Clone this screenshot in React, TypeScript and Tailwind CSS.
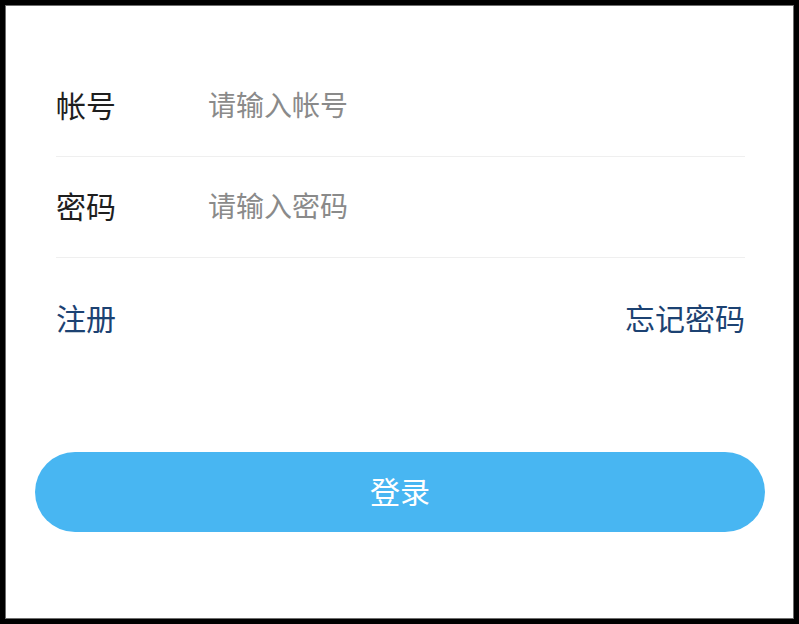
import React from "react";

const font = { fontFamily: '"Noto Sans CJK SC", "Noto Sans", sans-serif' };

export default function App() {
  return (
    <div className="w-[799px] h-[624px] bg-black p-[5px]" style={font}>
      <div className="h-full w-full border border-[#6e6e6e] bg-white flex flex-col">
        <div className="pt-[50px] pl-[50px] pr-[48px]">
          <div className="h-[101px] pb-[5px] flex items-center border-b border-[#efefef]">
            <span className="w-[152px] text-[30px] leading-none text-[#1e1e1e]">帐号</span>
            <input
              className="flex-1 text-[28px] leading-none outline-none bg-transparent text-[#333] placeholder:text-[#8a8a8a]"
              placeholder="请输入帐号"
            />
          </div>
          <div className="h-[101px] pb-[5px] flex items-center border-b border-[#efefef]">
            <span className="w-[152px] text-[30px] leading-none text-[#1e1e1e]">密码</span>
            <input
              type="password"
              className="flex-1 text-[28px] leading-none outline-none bg-transparent text-[#333] placeholder:text-[#8a8a8a]"
              placeholder="请输入密码"
            />
          </div>
          <div className="h-[122px] pb-[4px] flex items-center justify-between text-[30px] leading-none text-[#1c4272]">
            <span>注册</span>
            <span>忘记密码</span>
          </div>
        </div>
        <div className="mt-[72px] pl-[29px] pr-[28px]">
          <button className="w-full h-[80px] pb-[4px] rounded-full bg-[#48b6f2] text-white text-[30px] leading-none flex items-center justify-center">
            登录
          </button>
        </div>
      </div>
    </div>
  );
}
